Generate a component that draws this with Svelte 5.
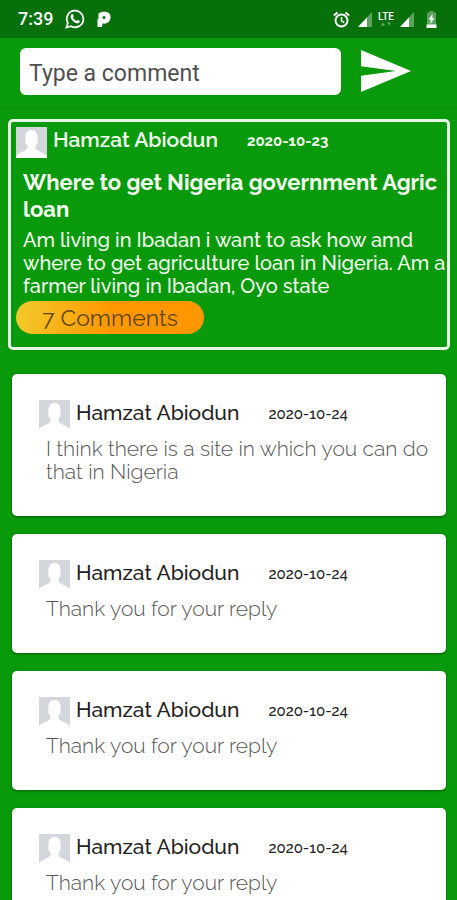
<script lang="ts">
	type Comment = { id: number; author: string; date: string; text: string };

	const post = {
		author: 'Hamzat Abiodun',
		date: '2020-10-23',
		title: 'Where to get Nigeria government Agric loan',
		body: 'Am living in Ibadan i want to ask how amd where to get agriculture loan in Nigeria. Am a farmer living in Ibadan, Oyo state',
		count: 7
	};

	let draft = $state('');
	let comments = $state<Comment[]>([
		{ id: 1, author: 'Hamzat Abiodun', date: '2020-10-24', text: 'I think there is a site in which you can do that in Nigeria' },
		{ id: 2, author: 'Hamzat Abiodun', date: '2020-10-24', text: 'Thank you for your reply' },
		{ id: 3, author: 'Hamzat Abiodun', date: '2020-10-24', text: 'Thank you for your reply' },
		{ id: 4, author: 'Hamzat Abiodun', date: '2020-10-24', text: 'Thank you for your reply' }
	]);

	function send(event: SubmitEvent) {
		event.preventDefault();
		if (!draft.trim()) return;
		const date = new Date().toISOString().slice(0, 10);
		comments.push({ id: comments.length + 1, author: post.author, date, text: draft });
		draft = '';
	}
</script>

{#snippet avatar()}
	<svg class="avatar" viewBox="0 0 31 31" aria-hidden="true">
		<rect width="31" height="31" fill="#d3d6db" />
		<path
			d="M0 31v-1.500c1.500-3.500 8-4.500 11-7.500 1-1.500.6-3-.4-4.500-1.300-1.200-1.800-3.500-1.100-4.800C9 7 10.500 3 15.500 3s6.500 4 6 9.700c.7 1.300.2 3.600-1.100 4.800-1 1.500-1.400 3-.4 4.500 3 3 9.500 4 11 7.500V31z"
			fill="#fff"
		/>
	</svg>
{/snippet}

{#snippet signal()}
	<svg width="14" height="15" viewBox="0 0 14 15" aria-hidden="true">
		<path d="M14 0v15H0z" fill="#fff" opacity="0.35" />
		<path d="M9 5.400V15H0z" fill="#fff" />
	</svg>
{/snippet}

<div class="app">
	<div class="status-bar">
		<span class="clock">7:39</span>
		<!-- whatsapp -->
		<svg width="20" height="20" viewBox="0 0 20 20" fill="none" aria-hidden="true">
			<path d="M1.500 18.500l1.300-4.600a8.300 8.300 0 1 1 3.300 3.300z" stroke="#fff" stroke-width="1.800" />
			<path
				d="M6.600 5.300c.5-.5 1.200-.4 1.400.1l.7 1.700c.1.500-.7 1.100-.7 1.500.7 1.500 1.900 2.600 3.400 3.200.5 0 1-.9 1.400-.8l1.700.8c.5.300.2 1.500-.4 1.900-1 .8-2.300.7-3.900 0a10 10 0 0 1-4.100-4c-.7-1.400-.7-3.300.5-4.400z"
				fill="#fff"
			/>
		</svg>
		<!-- palmpay -->
		<svg class="pay" width="14" height="17" viewBox="0 0 14 17" aria-hidden="true">
			<path
				d="M1.500 2.500C4 .5 10 0 12.300 2.500c2.400 3 1.200 8-2.300 9.500-1.500.7-3 .8-4.500.5L5 16H.5V8h1z"
				fill="#fff"
			/>
			<circle cx="7" cy="6.500" r="1.500" fill="#08700b" />
		</svg>
		<div class="spacer"></div>
		<svg class="alarm" width="17" height="17" viewBox="0 0 17 17" fill="none" stroke="#fff" aria-hidden="true">
			<circle cx="8.500" cy="9.500" r="6" stroke-width="1.900" />
			<path d="M8.500 6v4l2.800 1.700" stroke-width="1.500" />
			<path d="M.8 4.500l3.700-3M16.200 4.500l-3.700-3" stroke-width="2" />
		</svg>
		{@render signal()}
		<div class="network">
			<span>LTE</span>
			<svg width="10" height="4" viewBox="0 0 10 4" fill="#fff" opacity="0.4" aria-hidden="true">
				<path d="M0 3.500l2-3 2 3zM6 .5h4l-2 3z" />
			</svg>
		</div>
		{@render signal()}
		<svg class="battery" width="11" height="17" viewBox="0 0 11 17" aria-hidden="true">
			<path d="M3.500 0h4v1.500H10V17H1V1.500h2.500z" fill="#fff" opacity="0.35" />
			<path d="M.5 13.500h10V17H.5z" fill="#fff" />
			<path d="M6.500 3L2.500 8.500h2.300L4.200 13l4.300-6H6.300z" fill="#fff" />
		</svg>
	</div>

	<form class="composer" onsubmit={send}>
		<input type="text" placeholder="Type a comment" aria-label="Type a comment" bind:value={draft} />
		<button class="send" type="submit" aria-label="Send">
			<svg width="50" height="42" viewBox="0 0 50 42" aria-hidden="true">
				<path d="M0 42L50 21 0 0v16.300L35 21 0 25.700z" fill="#fff" />
			</svg>
		</button>
	</form>

	<main>
		<article class="post">
			<header>
				{@render avatar()}
				<span class="author">{post.author}</span>
				<time datetime={post.date}>{post.date}</time>
			</header>
			<h1>{post.title}</h1>
			<p>{post.body}</p>
			<button class="count">{post.count} Comments</button>
		</article>

		{#each comments as comment (comment.id)}
			<article class="comment">
				<header>
					{@render avatar()}
					<span class="author">{comment.author}</span>
					<time datetime={comment.date}>{comment.date}</time>
				</header>
				<p>{comment.text}</p>
			</article>
		{/each}
	</main>
</div>

<style>
	:global(body) {
		margin: 0;
		background: #099a0c;
	}

	.app {
		display: flex;
		flex-direction: column;
		height: 100vh;
		background: #099a0c;
		font-family: Raleway, Lato, sans-serif;
	}

	.status-bar {
		flex: none;
		display: flex;
		align-items: center;
		gap: 8px;
		box-sizing: border-box;
		height: 38px;
		padding: 0 20px 0 18px;
		background: #08700b;
		color: #fff;
	}

	.clock {
		margin-right: 4px;
		font: 500 18px/20px Roboto, sans-serif;
	}

	.pay {
		margin-left: 4px;
	}

	.spacer {
		flex: 1;
	}

	.network {
		display: flex;
		flex-direction: column;
		align-items: center;
		margin: 0 -2px;
		font: 500 10px/10px Roboto, sans-serif;
	}

	.battery {
		margin-left: 4px;
	}

	.composer {
		flex: none;
		display: flex;
		align-items: center;
		gap: 20px;
		box-sizing: border-box;
		height: 71px;
		padding: 0 46px 4px 20px;
		border-bottom: 1px solid #08900b;
	}

	input {
		flex: 1;
		min-width: 0;
		box-sizing: border-box;
		height: 47px;
		padding: 4px 9px 0;
		border: none;
		border-radius: 6px;
		background: #fff;
		color: #333;
		font: 400 23px/28px Roboto, sans-serif;
	}

	input::placeholder {
		color: #505050;
		opacity: 1;
	}

	button {
		border: none;
		cursor: pointer;
	}

	.send {
		padding: 0;
		background: none;
	}

	.send svg {
		display: block;
	}

	main {
		flex: 1;
		min-height: 0;
		overflow-y: auto;
		scrollbar-width: none;
		padding-top: 10px;
	}

	header {
		display: flex;
		align-items: center;
	}

	.avatar {
		flex: none;
		width: 31px;
		height: 31px;
	}

	.author {
		margin: 0 29px 5px 6px;
		font-size: 21px;
		line-height: 26px;
		font-weight: 500;
	}

	time {
		margin-bottom: 3px;
		font-size: 15px;
		line-height: 20px;
		font-weight: 500;
	}

	p {
		margin: 0;
		font-size: 20px;
		line-height: 23px;
	}

	.post {
		margin: 0 7px 24px 8px;
		padding: 5px 0 13px 5px;
		border: 3px solid #e9f8e6;
		border-radius: 5px;
		color: #f4fff0;
	}

	.post .author {
		font-weight: 600;
	}

	.post time {
		font-weight: 700;
	}

	h1 {
		margin: 11px 0 6px 7px;
		font-size: 22px;
		line-height: 27px;
		font-weight: 700;
	}

	.post p {
		margin-left: 7px;
		font-weight: 500;
	}

	.count {
		display: block;
		width: 188px;
		height: 33px;
		margin-top: 3px;
		padding: 0;
		border-radius: 17px;
		background: linear-gradient(100deg, #f2cb2c, #ff9800 50%);
		color: #634600;
		font: inherit;
		font-size: 23px;
		line-height: 33px;
	}

	.comment {
		margin: 0 11px 18px 12px;
		padding: 26px 16px 33px 27px;
		border-radius: 5px;
		background: #fff;
		box-shadow: 0 1px 3px rgba(0, 0, 0, 0.4);
		color: #222;
	}

	.comment p {
		margin: 6px 0 0 7px;
		color: #555;
		font-size: 21px;
		font-weight: 300;
	}
</style>
